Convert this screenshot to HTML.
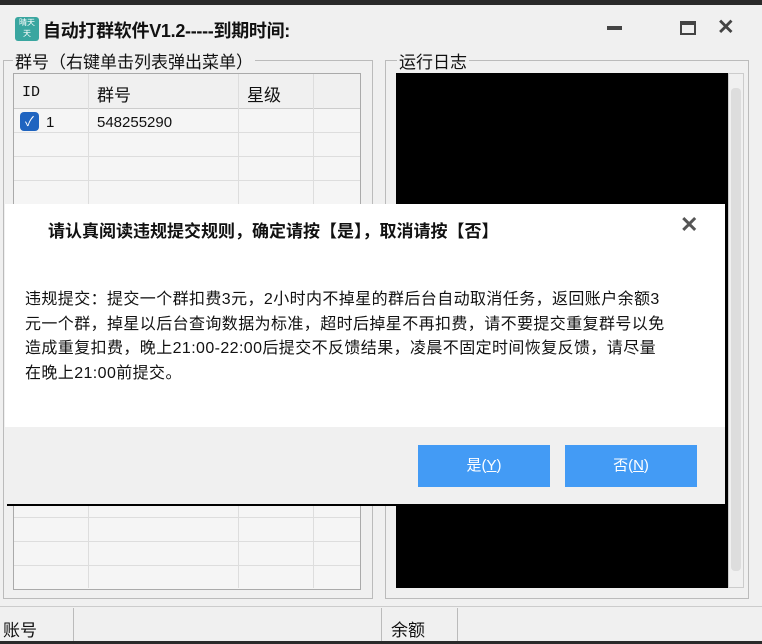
<html><head><style>
body{margin:0;width:762px;height:644px;overflow:hidden;background:#f0f0f0;font-family:"Liberation Sans","Noto Sans CJK SC",sans-serif;position:relative;color:#111}
.a{position:absolute}
.vl{position:absolute;width:1px;background:#ddd}
.hl{position:absolute;height:1px;background:#ddd}
</style></head><body>
<div class="a" style="left:0;top:0;width:762px;height:5px;background:#2a2a2a"></div>
<div class="a" style="left:15px;top:17px;width:24px;height:24px;background:#3aa6a0;border-radius:3px;color:#fff;font-size:8px;text-align:center;line-height:11px">晴天<br>天</div>
<div class="a" style="left:43px;top:17px;font-size:18px;font-weight:bold;letter-spacing:-0.3px">自动打群软件V1.2-----到期时间:</div>
<div class="a" style="left:607px;top:26px;width:15px;height:4px;background:#444"></div>
<div class="a" style="left:680px;top:21px;width:12px;height:8px;border:2px solid #444;border-top-width:4px"></div>
<div class="a" style="left:717px;top:15px;font-size:21px;color:#444;font-weight:bold">✕</div>
<div class="a" style="left:3px;top:60px;width:368px;height:537px;border:1px solid #bbb"></div>
<div class="a" style="left:13px;top:48px;font-size:17px;background:#f0f0f0;padding:0 2px">群号（右键单击列表弹出菜单）</div>
<div class="a" style="left:13px;top:73px;width:346px;height:515px;border:1px solid #aaa;background:#f5f5f5"></div>
<div class="a" style="left:14px;top:74px;width:346px;height:34px;background:#f0f0f0;border-bottom:1px solid #ccc"></div>
<div class="a" style="left:22px;top:84px;font-size:15px;font-family:'Liberation Mono',monospace">ID</div>
<div class="a" style="left:97px;top:81px;font-size:17px">群号</div>
<div class="a" style="left:247px;top:81px;font-size:17px">星级</div>
<div class="vl" style="left:88px;top:74px;height:514px"></div>
<div class="vl" style="left:238px;top:74px;height:514px"></div>
<div class="vl" style="left:313px;top:74px;height:514px"></div>
<div class="hl" style="left:14px;top:132px;width:346px"></div>
<div class="hl" style="left:14px;top:156px;width:346px"></div>
<div class="hl" style="left:14px;top:180px;width:346px"></div>
<div class="hl" style="left:14px;top:517px;width:346px"></div>
<div class="hl" style="left:14px;top:541px;width:346px"></div>
<div class="hl" style="left:14px;top:565px;width:346px"></div>
<div class="a" style="left:20px;top:112px;width:19px;height:19px;background:#1f64c0;border-radius:4px;color:#fff;font-size:13px;text-align:center;line-height:19px">✓</div>
<div class="a" style="left:46px;top:114px;font-size:15px">1</div>
<div class="a" style="left:97px;top:114px;font-size:15px">548255290</div>
<div class="a" style="left:385px;top:60px;width:362px;height:537px;border:1px solid #bbb"></div>
<div class="a" style="left:397px;top:48px;font-size:17px;background:#f0f0f0;padding:0 2px">运行日志</div>
<div class="a" style="left:396px;top:73px;width:332px;height:515px;background:#000"></div>
<div class="a" style="left:728px;top:73px;width:16px;height:515px;background:#f0f0f0;border:1px solid #ccc;box-sizing:border-box"></div>
<div class="a" style="left:731px;top:88px;width:10px;height:483px;background:#ddd;border-radius:4px"></div>
<div class="hl" style="left:0;top:606px;width:762px;background:#ccc"></div>
<div class="a" style="left:3px;top:616px;font-size:17px">账号</div>
<div class="a" style="left:391px;top:616px;font-size:17px">余额</div>
<div class="vl" style="left:73px;top:608px;height:34px;background:#bbb"></div>
<div class="vl" style="left:381px;top:608px;height:34px;background:#bbb"></div>
<div class="vl" style="left:457px;top:608px;height:34px;background:#bbb"></div>
<div class="a" style="left:0;top:641px;width:762px;height:3px;background:#2a2a2a"></div>
<div class="a" style="left:5px;top:204px;width:720px;height:300px;background:#f0f0f0;box-shadow:2px 2px 0 #000"></div>
<div class="a" style="left:5px;top:204px;width:720px;height:223px;background:#fff"></div>
<div class="a" style="left:48px;top:217px;font-size:17px;font-weight:bold">请认真阅读违规提交规则，确定请按【是】，取消请按【否】</div>
<div class="a" style="left:680px;top:212px;font-size:22px;color:#555;font-weight:bold">✕</div>
<div class="a" style="left:25px;top:288px;white-space:nowrap;font-size:16px;letter-spacing:0.4px;line-height:24.5px">违规提交：提交一个群扣费3元，2小时内不掉星的群后台自动取消任务，返回账户余额3<br>元一个群，掉星以后台查询数据为标准，超时后掉星不再扣费，请不要提交重复群号以免<br>造成重复扣费，晚上21:00-22:00后提交不反馈结果，凌晨不固定时间恢复反馈，请尽量<br>在晚上21:00前提交。</div>
<div class="a" style="left:418px;top:445px;width:132px;height:42px;background:#439bf5;color:#fff;font-size:15px;text-align:center;line-height:42px">是(<u>Y</u>)</div>
<div class="a" style="left:565px;top:445px;width:132px;height:42px;background:#439bf5;color:#fff;font-size:15px;text-align:center;line-height:42px">否(<u>N</u>)</div>
</body></html>
